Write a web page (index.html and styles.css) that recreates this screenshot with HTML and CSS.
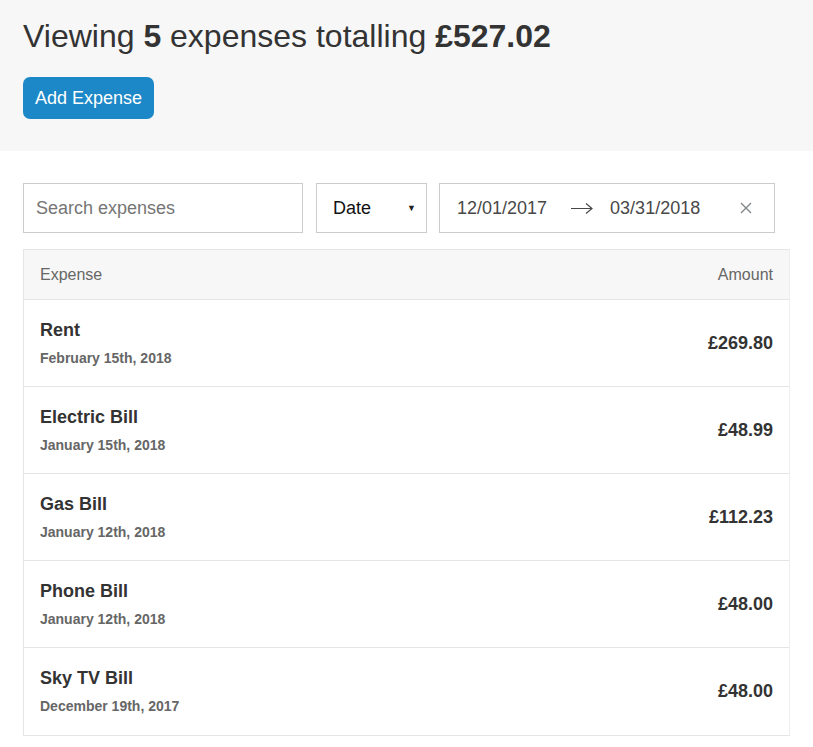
FILE: index.html
```html
<!DOCTYPE html>
<html>
<head>
<meta charset="utf-8">
<link rel="stylesheet" href="styles.css">
</head>
<body>
<div class="page-header">
  <div class="content">
    <h1 class="page-header__title">Viewing <span>5</span> expenses totalling <span>£527.02</span></h1>
    <div class="page-header__actions">
      <a class="button" href="#">Add Expense</a>
    </div>
  </div>
</div>
<div class="content">
  <div class="filters">
    <div class="filters__item"><input class="text-input" type="text" placeholder="Search expenses"></div>
    <div class="filters__item filters__item--select">
      <div class="select">
        <span>Date</span>
        <span class="select__caret">▼</span>
      </div>
    </div>
    <div class="filters__item filters__item--date">
      <div class="date-range">
        <span class="date-range__date">12/01/2017</span>
        <svg class="date-range__arrow" width="24" height="24" viewBox="0 0 24 24"><path d="M1 12.5h21M16 7.5l6 5-6 5" fill="none" stroke="#484848" stroke-width="1.2"/></svg>
        <span class="date-range__date">03/31/2018</span>
        <svg class="date-range__clear" width="12" height="12" viewBox="0 0 12 12"><path d="M1 1l10 10M11 1L1 11" stroke="#82888a" stroke-width="1.4"/></svg>
      </div>
    </div>
  </div>
  <div class="list">
    <div class="list-header">
      <div>Expense</div>
      <div>Amount</div>
    </div>
    <div class="list-body">
      <a class="list-item" href="#"><div><h3 class="list-item__title">Rent</h3><span class="list-item__sub">February 15th, 2018</span></div><h3 class="list-item__data">£269.80</h3></a>
      <a class="list-item" href="#"><div><h3 class="list-item__title">Electric Bill</h3><span class="list-item__sub">January 15th, 2018</span></div><h3 class="list-item__data">£48.99</h3></a>
      <a class="list-item" href="#"><div><h3 class="list-item__title">Gas Bill</h3><span class="list-item__sub">January 12th, 2018</span></div><h3 class="list-item__data">£112.23</h3></a>
      <a class="list-item" href="#"><div><h3 class="list-item__title">Phone Bill</h3><span class="list-item__sub">January 12th, 2018</span></div><h3 class="list-item__data">£48.00</h3></a>
      <a class="list-item" href="#"><div><h3 class="list-item__title">Sky TV Bill</h3><span class="list-item__sub">December 19th, 2017</span></div><h3 class="list-item__data">£48.00</h3></a>
    </div>
  </div>
</div>
</body>
</html>
```
FILE: styles.css
```css
* { box-sizing: border-box; }
html, body { margin: 0; padding: 0; }
body {
  font-family: "Liberation Sans", Arial, sans-serif;
  color: #333;
  background: #fff;
}
.content {
  padding: 0 23px;
}
.page-header {
  background: #f7f7f7;
  padding: 17px 0 32px;
  margin-bottom: 32px;
}
.page-header__title {
  font-size: 32px;
  font-weight: 300;
  line-height: 1.2;
  margin: 0 0 22px;
  color: #333;
}
.page-header__title span { font-weight: 700; }
.page-header__actions { display: flex; }
.button {
  display: inline-block;
  background: #1c88c7;
  color: #fff;
  text-decoration: none;
  font-size: 18px;
  line-height: 1;
  padding: 12px 12px 12px;
  border-radius: 7px;
}
.filters {
  display: flex;
  margin-bottom: 16px;
}
.filters__item--select { margin-left: 13px; }
.filters__item--date { margin-left: 12px; }
.text-input {
  width: 280px;
  height: 50px;
  border: 1px solid #cacccd;
  font-family: inherit;
  font-size: 18px;
  font-weight: 300;
  padding: 0 12px;
  color: #333;
  outline: none;
}
.text-input::placeholder { color: #757575; }
.select {
  width: 111px;
  height: 50px;
  border: 1px solid #cacccd;
  display: flex;
  align-items: center;
  justify-content: space-between;
  padding: 0 10px 0 16px;
  font-size: 18px;
  color: #111;
}
.select__caret { font-size: 9px; color: #222; }
.date-range {
  width: 336px;
  height: 50px;
  border: 1px solid #cacccd;
  display: flex;
  align-items: center;
  padding: 0 22px 0 17px;
  color: #484848;
  font-size: 18px;
  font-weight: 300;
}
.date-range__arrow { margin: 0 16px 0 23px; }
.date-range__clear { margin-left: auto; }
.list {
  border: 1px solid #e5e5e5;
  border-right-color: #eee;
  margin-bottom: 12px;
}
.list-header {
  background: #f7f7f7;
  border-bottom: 1px solid #e5e5e5;
  display: flex;
  justify-content: space-between;
  height: 50px;
  align-items: center;
  padding: 0 16px;
  color: #666;
  font-size: 16px;
}
.list-item {
  display: flex;
  justify-content: space-between;
  align-items: center;
  height: 87px;
  padding: 0 16px;
  border-bottom: 1px solid #e5e5e5;
  text-decoration: none;
  color: #333;
}
.list-item:last-child { border-bottom: none; }
.list-item__title {
  margin: 0 0 8px;
  font-size: 18px;
  font-weight: 700;
}
.list-item__sub {
  font-size: 14px;
  font-weight: 700;
  color: #666;
}
.list-item__data {
  margin: 0;
  font-size: 18px;
  font-weight: 700;
}
```
